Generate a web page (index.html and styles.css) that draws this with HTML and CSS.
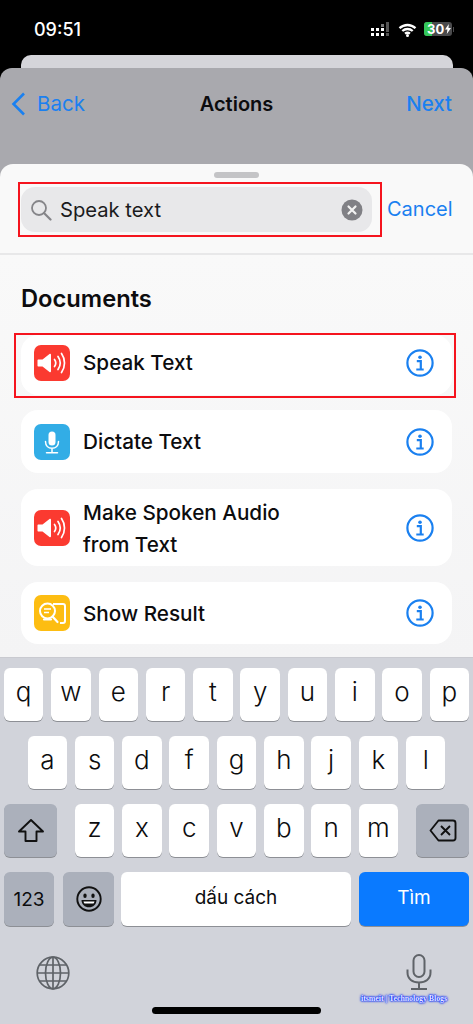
FILE: index.html
```html
<!DOCTYPE html>
<html lang="en">
<head>
    <meta charset="UTF-8">
    <meta name="viewport" content="width=device-width, initial-scale=1.0">
    <title>Actions</title>
    <link rel="stylesheet" href="styles.css">
</head>
<body>
    <svg width="0" height="0" class="defs">
        <symbol id="speaker" viewBox="0 0 36 36">
            <path d="M4.5 14.5h4l7-5.5c.8-.6 1.5-.2 1.5.7v16.6c0 .9-.7 1.3-1.5.7l-7-5.5h-4c-.7 0-1-.4-1-1v-5c0-.6.3-1 1-1z" fill="#fff"/>
            <path d="M20.5 14.5c1.6 2.2 1.6 4.8 0 7M24 11.500c2.800 4 2.800 9 0 13M27.500 8.500c4 5.600 4 13.400 0 19" fill="none" stroke="#fff" stroke-width="1.700" stroke-linecap="round"/>
        </symbol>
        <symbol id="info" viewBox="0 0 28 28">
            <circle cx="14" cy="14" r="12.600" fill="none" stroke="#1a80f0" stroke-width="2.200"/>
            <circle cx="14" cy="8.300" r="1.800" fill="#1a80f0"/>
            <path d="M10.800 12.200h4v8M10.300 20.500h7.400" fill="none" stroke="#1a80f0" stroke-width="2.200"/>
        </symbol>
    </svg>

    <div class="status-bar">
        <span class="time">09:51</span>
        <div class="status-icons">
            <svg width="20" height="15" viewBox="0 0 20 15">
                <g fill="#fff">
                    <rect x="0" y="6" width="3" height="3"/><rect x="5" y="6" width="3" height="3"/><rect x="10" y="6" width="3" height="3"/>
                    <rect x="0" y="11" width="3" height="3"/><rect x="5" y="11" width="3" height="3"/><rect x="10" y="11" width="3" height="3"/>
                </g>
                <rect x="10" y="2" width="3" height="3" fill="#777"/>
                <rect x="15" y="0" width="3" height="10" fill="#555"/>
                <rect x="15" y="11" width="3" height="3" fill="#555"/>
            </svg>
            <svg class="wifi" width="19" height="14" viewBox="0 0 19 14">
                <path d="M1.500 5.200c4.700-4.300 11.300-4.300 16 0M4.300 8c3-2.700 7.400-2.700 10.400 0M7 10.700c1.500-1.200 3.500-1.200 5 0" fill="none" stroke="#fff" stroke-width="2.300"/>
                <circle cx="9.500" cy="12.400" r="1.500" fill="#fff"/>
            </svg>
            <div class="battery">
                <span class="battery-fill"></span>
                <span class="battery-text">30</span>
                <svg class="bolt" width="6" height="10" viewBox="0 0 6 10"><path d="M3.800 0 0 5.600h2.400L1.800 10 6 4h-2.500z" fill="#fff"/></svg>
            </div>
            <span class="battery-tip"></span>
        </div>
    </div>

    <div class="back-card"></div>

    <div class="nav-card">
        <a class="nav-back">
            <svg width="15" height="24" viewBox="0 0 15 24"><path d="M13 1.500 2.500 12 13 22.500" fill="none" stroke="#1a80f0" stroke-width="2.600"/></svg>
            <span>Back</span>
        </a>
        <span class="nav-title">Actions</span>
        <a class="nav-next">Next</a>
    </div>

    <div class="sheet">
        <div class="handle"></div>
        <div class="search-row">
            <div class="red-box search-box">
                <div class="search">
                    <svg width="22" height="22" viewBox="0 0 22 22"><circle cx="9" cy="9" r="7" fill="none" stroke="#858589" stroke-width="1.800"/><path d="m14 14 6.500 6.500" stroke="#858589" stroke-width="2.200" stroke-linecap="round"/></svg>
                    <span class="search-text">Speak text</span>
                    <svg width="22" height="22" viewBox="0 0 22 22"><circle cx="11" cy="11" r="10.500" fill="#808085"/><path d="m7.500 7.500 7 7m0-7-7 7" stroke="#f2f2f2" stroke-width="2.200" stroke-linecap="round"/></svg>
                </div>
            </div>
            <a class="cancel">Cancel</a>
        </div>

        <div class="results">
            <h2>Documents</h2>

            <div class="red-box row-box">
                <div class="row row-speak">
                    <div class="app-icon red"><svg width="36" height="36"><use href="#speaker"/></svg></div>
                    <span class="row-label">Speak Text</span>
                    <svg class="info" width="28" height="28"><use href="#info"/></svg>
                </div>
            </div>

            <div class="row row-dictate">
                <div class="app-icon blue">
                    <svg width="36" height="36" viewBox="0 0 36 36">
                        <rect x="14.500" y="7.500" width="7" height="14" rx="3.500" fill="#fff"/>
                        <path d="M11.500 17.500c0 4.200 2.800 6.800 6.500 6.800s6.500-2.600 6.500-6.800M18 24.300v3.700M12.500 28.700h11" fill="none" stroke="#fff" stroke-width="1.500" stroke-linecap="round"/>
                    </svg>
                </div>
                <span class="row-label">Dictate Text</span>
                <svg class="info" width="28" height="28"><use href="#info"/></svg>
            </div>

            <div class="row row-audio">
                <div class="app-icon red"><svg width="36" height="36"><use href="#speaker"/></svg></div>
                <span class="row-label row-label-low">Make Spoken Audio<br>from Text</span>
                <svg class="info" width="28" height="28"><use href="#info"/></svg>
            </div>

            <div class="row row-result">
                <div class="app-icon yellow">
                    <svg width="36" height="36" viewBox="0 0 36 36">
                        <path d="M19 9h10c1.200 0 2 .8 2 2v15c0 1.200-.8 2-2 2h-3" fill="none" stroke="#fff" stroke-width="2"/>
                        <circle cx="13.500" cy="16" r="7.500" fill="none" stroke="#fff" stroke-width="2"/>
                        <path d="M10 14h7M10 17.500h5" stroke="#fff" stroke-width="1.500"/>
                        <path d="M10 24.500h7M18.500 21.500l5 5.500" fill="none" stroke="#fff" stroke-width="2.200" stroke-linecap="round"/>
                    </svg>
                </div>
                <span class="row-label row-label-low">Show Result</span>
                <svg class="info" width="28" height="28"><use href="#info"/></svg>
            </div>
        </div>
    </div>

    <div class="keyboard">
        <div class="key-row">
            <span class="key">q</span><span class="key">w</span><span class="key">e</span><span class="key">r</span><span class="key">t</span><span class="key">y</span><span class="key">u</span><span class="key">i</span><span class="key">o</span><span class="key">p</span>
        </div>
        <div class="key-row">
            <span class="key">a</span><span class="key">s</span><span class="key">d</span><span class="key">f</span><span class="key">g</span><span class="key">h</span><span class="key">j</span><span class="key">k</span><span class="key">l</span>
        </div>
        <div class="key-row key-row-split">
            <span class="key key-dark key-wide">
                <svg width="28" height="25" viewBox="0 0 28 25"><path d="M14 2 2 13.500h6.500V23h11v-9.500H26z" fill="none" stroke="#111" stroke-width="1.900" stroke-linejoin="round"/></svg>
            </span>
            <div class="key-group">
                <span class="key">z</span><span class="key">x</span><span class="key">c</span><span class="key">v</span><span class="key">b</span><span class="key">n</span><span class="key">m</span>
            </div>
            <span class="key key-dark key-wide">
                <svg width="28" height="23" viewBox="0 0 28 23"><path d="M9.500 1.500H24c1.500 0 2.500 1 2.500 2.500v15c0 1.500-1 2.500-2.500 2.500H9.500L1.500 11.500z" fill="none" stroke="#111" stroke-width="1.900" stroke-linejoin="round"/><path d="m12 7 9 9m0-9-9 9" stroke="#111" stroke-width="1.900"/></svg>
            </span>
        </div>
        <div class="key-row key-row-bottom">
            <span class="key key-dark key-num">123</span>
            <span class="key key-dark key-emoji">
                <svg width="26" height="26" viewBox="0 0 26 26"><circle cx="13" cy="13" r="11.700" fill="none" stroke="#111" stroke-width="1.900"/><ellipse cx="9" cy="9.800" rx="1.700" ry="2.300" fill="#111"/><ellipse cx="17" cy="9.800" rx="1.700" ry="2.300" fill="#111"/><path d="M5.500 14h15c0 4.500-3.300 7.300-7.500 7.300S5.500 18.500 5.500 14z" fill="#111"/><path d="M7.500 15.500h11c-.3 1-.6 1.500-1 2h-9c-.4-.5-.8-1-1-2z" fill="#fff"/></svg>
            </span>
            <span class="key key-space">dấu cách</span>
            <span class="key key-go">Tìm</span>
        </div>
        <div class="kb-bottom">
            <svg class="globe" width="34" height="34" viewBox="0 0 34 34"><g fill="none" stroke="#5f6368" stroke-width="1.700"><circle cx="17" cy="17" r="15.800"/><ellipse cx="17" cy="17" rx="7.500" ry="15.800"/><path d="M17 1.200v31.600M1.200 17h31.600M3.500 9h27M3.500 25h27"/></g></svg>
            <svg width="26" height="36" viewBox="0 0 26 36"><g fill="none" stroke="#5f6368" stroke-width="2"><rect x="7.500" y="1" width="11" height="22" rx="5.500"/><path d="M1.500 15.500v3c0 6.500 5 10 11.500 10s11.500-3.500 11.500-10v-3M13 28.500v5.500"/><path d="M5 35h16"/></g></svg>
        </div>
        <div class="home-bar"></div>
        <span class="watermark">itsmeit | Technology Blogs</span>
    </div>
</body>
</html>
```

FILE: styles.css
```css
* {
    box-sizing: border-box;
}
body {
    margin: 0;
    width: 473px;
    height: 1024px;
    overflow: hidden;
    background-color: #000;
    font-family: 'Inter', 'Noto Sans', sans-serif;
    color: #0c0c0e;
    display: flex;
    flex-direction: column;
}
.defs {
    position: absolute;
}

/* status bar */
.status-bar {
    height: 55px;
    flex: none;
    display: flex;
    justify-content: space-between;
    padding: 19px 19px 0 34px;
    color: #fff;
}
.time {
    font-size: 18px;
    font-weight: 500;
    line-height: 21px;
}
.status-icons {
    display: flex;
    align-items: flex-start;
    padding-top: 3px;
}
.wifi {
    margin: 1px 7px 0 7px;
}
.battery {
    position: relative;
    width: 28px;
    height: 14px;
    border-radius: 3px;
    background: #4a4a4c;
    overflow: hidden;
    display: flex;
    align-items: center;
    padding-left: 3px;
    font-size: 13px;
    font-weight: 700;
    line-height: 14px;
}
.battery-fill {
    position: absolute;
    left: 0;
    top: 0;
    bottom: 0;
    width: 8px;
    background: #34c759;
}
.battery-text {
    position: relative;
}
.bolt {
    position: relative;
    flex: none;
    margin-left: 1px;
}
.battery-tip {
    width: 1px;
    height: 5px;
    margin: 5px 0 0 1px;
    background: #4a4a4c;
}

/* stacked cards behind the sheet */
.back-card {
    height: 13px;
    flex: none;
    margin: 0 20px 0 21px;
    background: #d5d5da;
    border-radius: 10px 10px 0 0;
}
.nav-card {
    height: 110px;
    flex: none;
    margin-bottom: -14px;
    background: #a9a9ae;
    border-radius: 12px 12px 0 0;
    display: grid;
    grid-template-columns: 1fr auto 1fr;
    align-items: start;
    padding: 22px 21px 0;
    font-size: 20.500px;
    line-height: 28px;
}
.nav-back {
    display: flex;
    align-items: center;
    gap: 11px;
    margin-left: -10px;
    color: #1a80f0;
}
.nav-title {
    font-weight: 600;
    font-size: 20px;
}
.nav-next {
    justify-self: end;
    color: #1a80f0;
    font-weight: 500;
}

/* sheet */
.sheet {
    position: relative;
    height: 493px;
    flex: none;
    background: #f9f9f9;
    border-radius: 13px 13px 0 0;
    display: flex;
    flex-direction: column;
    overflow: hidden;
}
.handle {
    width: 45px;
    height: 6px;
    margin: 8px auto 0;
    background: #c4c4c6;
    border-radius: 3px;
}
.red-box {
    border: 2px solid #f5141e;
}
.search-row {
    height: 77px;
    flex: none;
    display: flex;
    padding: 4px 0 0 18px;
    border-bottom: 2px solid #e8e8e9;
}
.search-box {
    width: 364px;
    height: 55px;
    padding: 3px 8px 2px 1px;
}
.search {
    height: 45px;
    display: flex;
    align-items: center;
    background: #e8e8ea;
    border-radius: 14px;
    padding: 0 9px 0 9px;
}
.search-text {
    flex: 1;
    margin-left: 8px;
    font-size: 20.200px;
    color: #1b1b1d;
}
.cancel {
    margin: 13px 0 0 5px;
    font-size: 20px;
    line-height: 28px;
    color: #1a80f0;
}

/* results */
.results {
    flex: 1;
    padding: 0 21px;
    background: linear-gradient(#f9f9f9, #f4f4f5);
}
.results h2 {
    margin: 29px 0 19px;
    font-size: 23.700px;
    line-height: 30px;
    font-weight: 600;
}
.row {
    display: flex;
    align-items: center;
    background: #fff;
    border-radius: 17px;
    padding: 0 18px 0 13px;
}
.row-box {
    margin: 0 -4px 12px -7px;
    padding: 0 2px 1px 5px;
    height: 65px;
}
.row-speak {
    height: 60px;
    padding-bottom: 4px;
}
.row-dictate {
    height: 63px;
    margin-bottom: 16px;
}
.row-audio {
    height: 77px;
    margin-bottom: 16px;
}
.row-result {
    height: 62px;
}
.app-icon {
    width: 36px;
    height: 36px;
    flex: none;
    border-radius: 7px;
}
.app-icon svg {
    display: block;
}
.red {
    background: #fb3a30;
}
.blue {
    background: #32ade6;
}
.yellow {
    background: #fdbd12;
}
.row-label {
    flex: 1;
    margin-left: 13px;
    font-size: 20.700px;
    font-weight: 500;
    line-height: 32px;
}
.row-label-low {
    margin-top: 2px;
}
.info {
    flex: none;
}

/* keyboard */
.keyboard {
    position: relative;
    flex: 1;
    background: #d1d3da;
    border-top: 1px solid #c9cad0;
    padding: 10px 4px 0;
    display: flex;
    flex-direction: column;
    gap: 15px;
}
.key-row {
    display: flex;
    justify-content: center;
    gap: 7.800px;
    height: 53px;
}
.key {
    width: 39.500px;
    flex: none;
    display: flex;
    align-items: center;
    justify-content: center;
    background: #fff;
    border-radius: 6px;
    box-shadow: 0 1px 0 #8d8f95;
    font-size: 26px;
    font-weight: 300;
    padding-bottom: 6px;
    color: #0c0c0e;
}
.key-row-split {
    justify-content: space-between;
}
.key-group {
    display: flex;
    gap: 7.800px;
}
.key-dark {
    background: #abb0bb;
    padding-bottom: 0;
}
.key-wide {
    width: 53px;
}
.key-row-bottom {
    gap: 0;
    height: 54px;
}
.key-num {
    width: 50px;
    margin-right: 9px;
    font-size: 19px;
    font-weight: 400;
}
.key-emoji {
    width: 51px;
    margin-right: 7px;
}
.key-space {
    width: 230px;
    margin-right: 8px;
    font-size: 19px;
    font-weight: 400;
    padding-bottom: 4px;
}
.key-go {
    width: 110px;
    background: #0a7aff;
    color: #fff;
    font-size: 19px;
    font-weight: 400;
    padding-bottom: 4px;
}
.kb-bottom {
    display: flex;
    justify-content: space-between;
    align-items: flex-start;
    padding: 13px 37px 0 32px;
}
.globe {
    margin-top: 2px;
}
.home-bar {
    position: absolute;
    left: 152px;
    bottom: 10px;
    width: 169px;
    height: 7px;
    background: #000;
    border-radius: 4px;
}
.watermark {
    position: absolute;
    left: 361px;
    top: 335px;
    font-family: 'Liberation Serif', serif;
    font-size: 7.800px;
    font-weight: 700;
    line-height: 11px;
    white-space: nowrap;
    color: #e8eaff;
    text-shadow: 0 0 1px #0a2cff, 0 0 2px #0a2cff, 0 0 2px #0a2cff, 0 0 3px #0a2cff;
}
```
